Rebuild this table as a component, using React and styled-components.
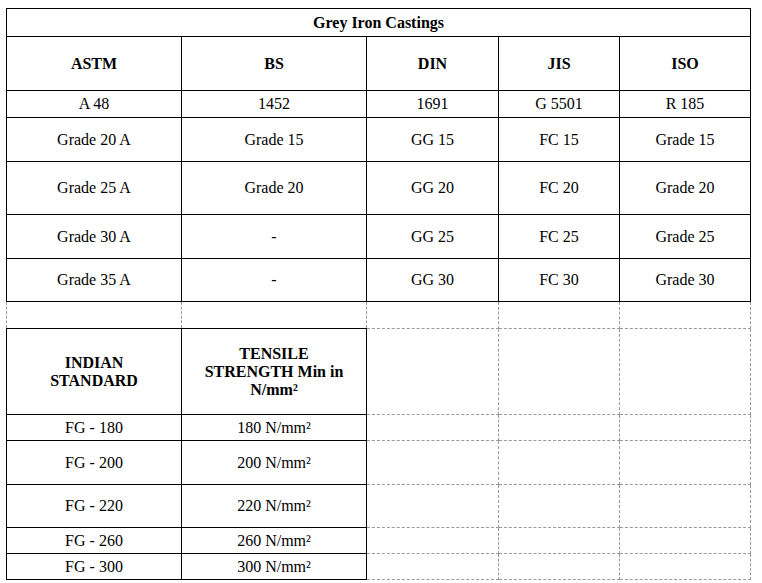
import React from "react";
import styled, { createGlobalStyle } from "styled-components";

const Global = createGlobalStyle`
  html, body { margin: 0; padding: 0; background: #fff; }
  body { font-family: "Liberation Serif", "Times New Roman", serif; color: #000; }
`;

const Page = styled.div`
  padding: 8px 0 0 6px;
`;

const Table = styled.table`
  border-collapse: collapse;
  table-layout: fixed;
  width: 745px;
  font-size: 16px;
`;

const Row = styled.tr`
  height: ${(p) => p.$h}px;
`;

const Cell = styled.td`
  border: 1px ${(p) => (p.$empty ? "dashed #9a9a9a" : "solid #000")};
  text-align: center;
  vertical-align: middle;
  padding: 0 4px;
  font-weight: ${(p) => (p.$bold ? 700 : 400)};
  line-height: 18px;
`;

const cols = [175, 185, 132, 121, 131];

const top = [
  { h: 27, c: ["A 48", "1452", "1691", "G 5501", "R 185"] },
  { h: 44, c: ["Grade 20 A", "Grade 15", "GG 15", "FC 15", "Grade 15"] },
  { h: 53, c: ["Grade 25 A", "Grade 20", "GG 20", "FC 20", "Grade 20"] },
  { h: 44, c: ["Grade 30 A", "-", "GG 25", "FC 25", "Grade 25"] },
  { h: 43, c: ["Grade 35 A", "-", "GG 30", "FC 30", "Grade 30"] },
];

const bottom = [
  { h: 26, c: ["FG - 180", "180 N/mm²"] },
  { h: 44, c: ["FG - 200", "200 N/mm²"] },
  { h: 43, c: ["FG - 220", "220 N/mm²"] },
  { h: 26, c: ["FG - 260", "260 N/mm²"] },
  { h: 26, c: ["FG - 300", "300 N/mm²"] },
];

export default function App() {
  return (
    <>
      <Global />
      <Page>
        <Table>
          <colgroup>
            {cols.map((w, i) => (
              <col key={i} style={{ width: w }} />
            ))}
          </colgroup>
          <tbody>
            <Row $h={28}>
              <Cell $bold colSpan={5}>Grey Iron Castings</Cell>
            </Row>
            <Row $h={54}>
              {["ASTM", "BS", "DIN", "JIS", "ISO"].map((t) => (
                <Cell $bold key={t}>{t}</Cell>
              ))}
            </Row>
            {top.map((r, i) => (
              <Row $h={r.h} key={"t" + i}>
                {r.c.map((t, j) => (
                  <Cell key={j}>{t}</Cell>
                ))}
              </Row>
            ))}
            <Row $h={27}>
              {cols.map((_, j) => (
                <Cell $empty key={j} />
              ))}
            </Row>
            <Row $h={86}>
              <Cell $bold>
                INDIAN
                <br />
                STANDARD
              </Cell>
              <Cell $bold>
                TENSILE
                <br />
                STRENGTH Min in
                <br />
                N/mm²
              </Cell>
              <Cell $empty />
              <Cell $empty />
              <Cell $empty />
            </Row>
            {bottom.map((r, i) => (
              <Row $h={r.h} key={"b" + i}>
                <Cell>{r.c[0]}</Cell>
                <Cell>{r.c[1]}</Cell>
                <Cell $empty />
                <Cell $empty />
                <Cell $empty />
              </Row>
            ))}
          </tbody>
        </Table>
      </Page>
    </>
  );
}
